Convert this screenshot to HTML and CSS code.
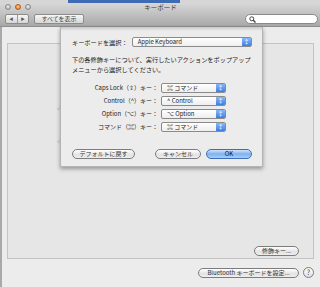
FILE: index.html
```html
<!DOCTYPE html>
<html lang="ja">
<head>
    <meta charset="UTF-8">
    <title>キーボード</title>
    <link rel="stylesheet" href="styles.css">
</head>
<body>
<div class="window">
    <div class="toolbar">
        <div class="topstrip"><span class="bluebar"></span></div>
        <div class="titlerow">
            <div class="lights">
                <span class="light"></span>
                <span class="light close"></span>
                <span class="light"></span>
            </div>
            <div class="title">キーボード</div>
        </div>
        <div class="toolrow">
            <div class="navbtns">
                <span class="nav">&#9664;</span>
                <span class="nav">&#9654;</span>
            </div>
            <div class="tbtn">すべてを表示</div>
            <div class="search">
                <svg width="7" height="7" viewBox="0 0 7 7">
                    <circle cx="2.8" cy="2.8" r="2" fill="none" stroke="#444" stroke-width="1"/>
                    <line x1="4.3" y1="4.3" x2="6.5" y2="6.5" stroke="#444" stroke-width="1.4"/>
                </svg>
            </div>
        </div>
    </div>

    <div class="content">
        <div class="panel">
            <!-- check marks of the pane that peek out beside the sheet -->
            <div class="ghost">
                <div class="ghost-check">✓</div>
                <div class="ghost-check second">✓</div>
            </div>
            <div class="panel-foot">
                <div class="btn">修飾キー...</div>
            </div>
        </div>
        <div class="bottom">
            <div class="btn">Bluetooth キーボードを設定...</div>
            <div class="help">?</div>
        </div>
    </div>

    <div class="sheet">
        <div class="select-row">
            <span class="lbl">キーボードを選択：</span>
            <div class="popup wide">Apple Keyboard<span class="arrows">&#8597;</span></div>
        </div>
        <p class="desc">下の各修飾キーについて、実行したいアクションをポップアップ<br>メニューから選択してください。</p>
        <div class="keys">
            <span class="klabel">Caps Lock（⇪）キー：</span>
            <div class="popup">⌘ コマンド<span class="arrows">&#8597;</span></div>
            <span class="klabel">Control（^）キー：</span>
            <div class="popup">^ Control<span class="arrows">&#8597;</span></div>
            <span class="klabel">Option（⌥）キー：</span>
            <div class="popup">⌥ Option<span class="arrows">&#8597;</span></div>
            <span class="klabel">コマンド（⌘）キー：</span>
            <div class="popup">⌘ コマンド<span class="arrows">&#8597;</span></div>
        </div>
        <div class="sheet-btns">
            <div class="btn">デフォルトに戻す</div>
            <div class="right-btns">
                <div class="btn">キャンセル</div>
                <div class="btn ok">OK</div>
            </div>
        </div>
    </div>
</div>
</body>
</html>
```

FILE: styles.css
```css
* {
    box-sizing: border-box;
}
body {
    margin: 0;
    width: 320px;
    height: 287px;
    overflow: hidden;
    font-family: "Noto Sans CJK JP", "DejaVu Sans", "Liberation Sans", sans-serif;
    font-size: 6.2px;
    color: #222;
    background-color: #ececec;
}
.window {
    position: relative;
    height: 287px;
    border-left: 2px solid #a9a9a9;
    background-color: #ececec;
}
.toolbar {
    height: 27px;
    margin-left: -2px;
    background: linear-gradient(#dedede, #a8a8a8);
    border-bottom: 1px solid #8e8e8e;
}
.topstrip {
    height: 3px;
    background-color: #d6d6d6;
}
.bluebar {
    display: block;
    margin-left: 68px;
    width: 112px;
    height: 3px;
    background-color: #3d6bb4;
}
.titlerow {
    display: flex;
    align-items: center;
    height: 8px;
}
.lights {
    display: flex;
    gap: 4px;
    padding-left: 5px;
}
.light {
    width: 6px;
    height: 6px;
    border-radius: 50%;
    background: radial-gradient(circle at 50% 35%, #f2f2f2, #a4a4a4);
    border: 1px solid #8a8a8a;
}
.light.close {
    background: radial-gradient(circle at 50% 35%, #ffd08a, #e6711c);
    border-color: #b25a14;
}
.title {
    flex: 1;
    text-align: center;
    margin-right: 30px;
    font-size: 6.5px;
    color: #3a3a3a;
    line-height: 8px;
}
.toolrow {
    display: flex;
    align-items: center;
    height: 12px;
    margin-top: 2px;
    padding-left: 5px;
}
.navbtns {
    display: flex;
    width: 24px;
    height: 10px;
    border: 1px solid #8c8c8c;
    border-radius: 2px;
    background: linear-gradient(#f6f6f6, #d6d6d6);
}
.nav {
    flex: 1;
    font-size: 4px;
    line-height: 8px;
    text-align: center;
    color: #555;
}
.nav + .nav {
    border-left: 1px solid #9a9a9a;
}
.tbtn {
    margin-left: 5px;
    width: 50px;
    height: 10px;
    border: 1px solid #8c8c8c;
    border-radius: 2px;
    background: linear-gradient(#f6f6f6, #d6d6d6);
    font-size: 6px;
    line-height: 8px;
    text-align: center;
    color: #444;
}
.search {
    margin-left: auto;
    margin-right: 2px;
    width: 73px;
    height: 10px;
    border-radius: 5px;
    background-color: #fff;
    border: 1px solid #8a8a8a;
    display: flex;
    align-items: center;
    padding-left: 3px;
}
.search svg {
    display: block;
}
.content {
    padding: 16px 6px 0 5px;
}
.panel {
    height: 216px;
    border: 1px solid #c4c4c4;
    background-color: #e6e6e6;
    display: flex;
    flex-direction: column;
}
.ghost {
    padding: 60px 0 0 49px;
    color: #b4b4b4;
    font-size: 6px;
    line-height: 7px;
}
.ghost-check.second {
    margin-top: 26px;
}
.panel-foot {
    margin-top: auto;
    display: flex;
    justify-content: flex-end;
    padding: 0 14px 1px 0;
}
.btn {
    height: 10px;
    padding: 0 7px;
    border: 1px solid #7c7c7c;
    border-radius: 5px;
    background: linear-gradient(#ffffff, #e2e2e2 60%, #efefef);
    font-size: 6px;
    line-height: 8px;
    text-align: center;
    color: #333;
}
.panel-foot .btn {
    width: 45px;
    padding: 0;
    margin-bottom: 1px;
}
.bottom {
    display: flex;
    justify-content: flex-end;
    align-items: center;
    gap: 4px;
    padding-top: 8px;
}
.bottom .btn {
    width: 101px;
    padding: 0;
}
.help {
    width: 11px;
    height: 11px;
    border-radius: 50%;
    border: 1px solid #7c7c7c;
    background: linear-gradient(#ffffff, #e0e0e0);
    font-size: 7px;
    line-height: 9px;
    text-align: center;
    color: #444;
}
.sheet {
    position: absolute;
    left: 58px;
    top: 27px;
    width: 203px;
    height: 140px;
    background: linear-gradient(#c9c9c9, #ececec 4px);
    border: 1px solid #b5b5b5;
    border-top: none;
    box-shadow: 0 2px 4px rgba(0, 0, 0, 0.35);
    padding: 10px 10px 0 11px;
}
.select-row {
    display: flex;
    align-items: center;
}
.lbl {
    width: 60px;
    white-space: nowrap;
}
.popup {
    position: relative;
    width: 65px;
    height: 10px;
    border: 1px solid #8a8a8a;
    border-radius: 2px;
    background: linear-gradient(#ffffff, #eeeeee);
    padding-left: 5px;
    font-size: 6px;
    line-height: 8px;
    color: #222;
    white-space: nowrap;
}
.popup.wide {
    width: 121px;
}
.arrows {
    position: absolute;
    right: 0;
    top: 0;
    width: 9px;
    height: 8px;
    border-radius: 0 1px 1px 0;
    background: linear-gradient(#8cb8f4, #3b7ee4);
    color: #fff;
    font-size: 6px;
    line-height: 8px;
    text-align: center;
}
.desc {
    margin: 8px 0 0;
    line-height: 10px;
    white-space: nowrap;
}
.keys {
    display: grid;
    grid-template-columns: 86px 65px;
    grid-auto-rows: 10px;
    column-gap: 3px;
    row-gap: 3px;
    align-items: center;
    margin-top: 8px;
}
.klabel {
    text-align: right;
    font-size: 6px;
    line-height: 10px;
    white-space: nowrap;
    color: #222;
}
.sheet-btns {
    display: flex;
    justify-content: space-between;
    margin-top: 17px;
}
.sheet-btns .btn {
    width: 63px;
    padding: 0;
}
.right-btns {
    display: flex;
    gap: 5px;
}
.right-btns .btn {
    width: 46px;
}
.btn.ok {
    border-color: #3c6fb8;
    background: linear-gradient(#cfe3fb, #7eb2f0 50%, #a9cdf7);
    color: #111;
}
```
